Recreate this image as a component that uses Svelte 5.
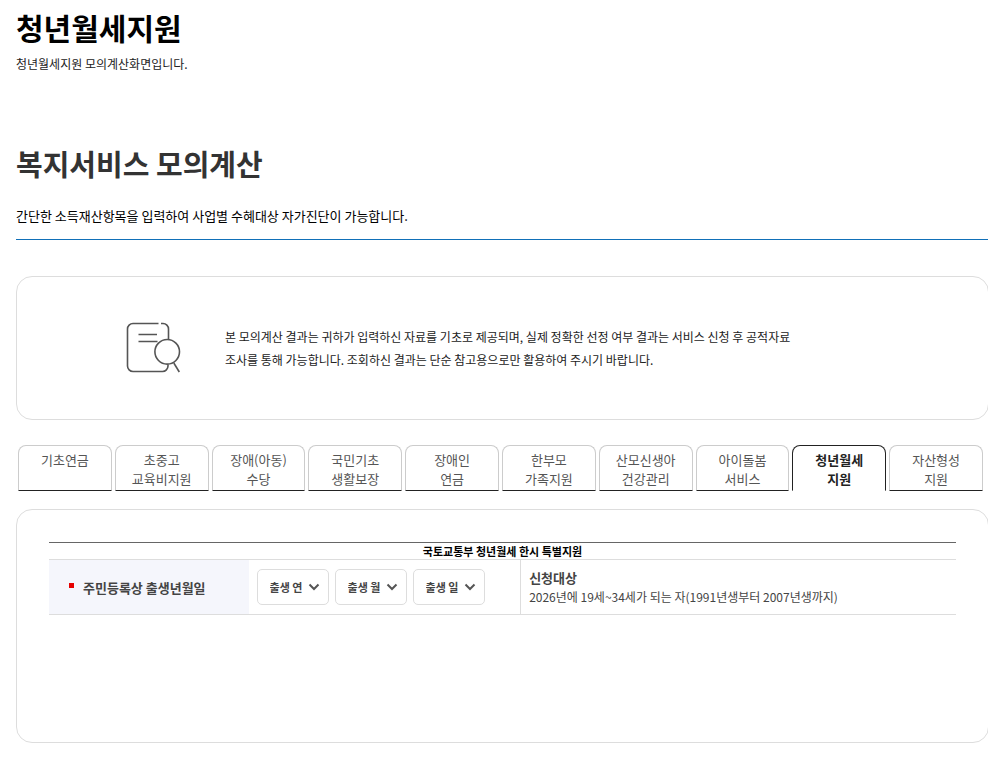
<script lang="ts">
    let selected = $state('youth-rent')

    const tabs = [
        { id: 'pension', lines: ['기초연금'] },
        { id: 'school', lines: ['초중고', '교육비지원'] },
        { id: 'disabled-child', lines: ['장애(아동)', '수당'] },
        { id: 'basic', lines: ['국민기초', '생활보장'] },
        { id: 'disabled-pension', lines: ['장애인', '연금'] },
        { id: 'single-parent', lines: ['한부모', '가족지원'] },
        { id: 'maternity', lines: ['산모신생아', '건강관리'] },
        { id: 'childcare', lines: ['아이돌봄', '서비스'] },
        { id: 'youth-rent', lines: ['청년월세', '지원'] },
        { id: 'asset', lines: ['자산형성', '지원'] }
    ]

    const birthFields = [
        { id: 'birth-year', label: '출생 연', from: 1991, to: 2007 },
        { id: 'birth-month', label: '출생 월', from: 1, to: 12 },
        { id: 'birth-day', label: '출생 일', from: 1, to: 31 }
    ]

    function range(from: number, to: number) {
        return Array.from({ length: to - from + 1 }, (_, i) => from + i)
    }
</script>

<main>
    <header>
        <h1>청년월세지원</h1>
        <p class="summary">청년월세지원 모의계산화면입니다.</p>
    </header>

    <section class="intro">
        <h2>복지서비스 모의계산</h2>
        <p>간단한 소득재산항목을 입력하여 사업별 수혜대상 자가진단이 가능합니다.</p>
    </section>

    <div class="box notice">
        <svg width="56" height="52" viewBox="0 0 56 52" fill="none" stroke="#555" stroke-width="1.6" aria-hidden="true">
            <path d="M32.500 1.500H7a5.500 5.500 0 0 0-5.500 5.500V44a5.500 5.500 0 0 0 5.500 5.500H36.500a5.500 5.500 0 0 0 5.500-5.500V42.500M35 1.500H37a5.500 5.500 0 0 1 5.500 5.500V17.500" />
            <path d="M12.500 12.500H31M12.500 19.500H31.500" />
            <circle cx="41.200" cy="29.800" r="12.300" />
            <path d="M47.800 41L53.300 50" />
        </svg>
        <p>
            본 모의계산 결과는 귀하가 입력하신 자료를 기초로 제공되며, 실제 정확한 선정 여부 결과는 서비스 신청 후 공적자료<br />
            조사를 통해 가능합니다. 조회하신 결과는 단순 참고용으로만 활용하여 주시기 바랍니다.
        </p>
    </div>

    <div class="tabs" role="tablist">
        {#each tabs as tab}
            <button
                role="tab"
                class:active={selected === tab.id}
                aria-selected={selected === tab.id}
                onclick={() => (selected = tab.id)}
            >
                {#each tab.lines as line}
                    <span>{line}</span>
                {/each}
            </button>
        {/each}
    </div>

    <div class="box panel">
        <table>
            <caption>국토교통부 청년월세 한시 특별지원</caption>
            <tbody>
                <tr>
                    <th scope="row"><span class="required">주민등록상 출생년월일</span></th>
                    <td class="birth">
                        <div class="selects">
                            {#each birthFields as field}
                                <div class="select">
                                    <select id={field.id} aria-label={field.label}>
                                        <option value="">{field.label}</option>
                                        {#each range(field.from, field.to) as n}
                                            <option value={n}>{n}</option>
                                        {/each}
                                    </select>
                                    <svg width="12" height="8" viewBox="0 0 12 8" aria-hidden="true">
                                        <path d="M1.500 1.500L6 6L10.500 1.500" fill="none" stroke="#555" stroke-width="2" />
                                    </svg>
                                </div>
                            {/each}
                        </div>
                    </td>
                    <td class="target">
                        <strong>신청대상</strong>
                        <p>2026년에 19세~34세가 되는 자(1991년생부터 2007년생까지)</p>
                    </td>
                </tr>
            </tbody>
        </table>
    </div>
</main>

<style>
    :global(body) {
        background: #fff;
        font-family: "Noto Sans CJK KR", sans-serif;
        font-size: 13px;
        color: #000;
    }
    h1, h2, p {
        margin: 0;
    }
    main {
        margin: 0 19px 0 16px;
        padding-bottom: 24px;
        overflow: hidden;
    }

    h1 {
        padding-top: 7px;
        font-size: 30px;
        line-height: 40px;
        font-weight: 700;
    }
    .summary {
        margin-top: 7px;
        font-size: 12px;
        line-height: 20px;
        color: #222;
    }

    .intro {
        margin-top: 65px;
        padding-bottom: 13px;
        border-bottom: 1px solid #1170b8;
    }
    h2 {
        font-size: 29px;
        line-height: 48px;
        font-weight: 700;
        color: #333;
    }
    .intro p {
        margin-top: 19px;
        line-height: 20px;
    }

    .box {
        box-sizing: border-box;
        margin-right: -1px;
        border: 1px solid #ddd;
        border-radius: 16px;
    }
    .notice {
        display: flex;
        align-items: center;
        gap: 43px;
        min-height: 144px;
        margin-top: 36px;
        padding: 0 109px;
    }
    .notice svg {
        flex: none;
    }
    .notice p {
        font-size: 12px;
        line-height: 23px;
        color: #222;
    }

    .tabs {
        display: grid;
        grid-template-columns: repeat(10, 1fr);
        gap: 3px;
        margin-top: 25px;
        padding: 0 5px 0 2px;
    }
    .tabs button {
        display: flex;
        flex-direction: column;
        align-items: center;
        min-height: 46px;
        padding: 4px 0 2px;
        border: 1px solid #ccc;
        border-bottom-color: #222;
        border-radius: 8px 8px 0 0;
        background: #fff;
        font-family: inherit;
        font-size: 13px;
        line-height: 19px;
        color: #555;
        white-space: nowrap;
        cursor: pointer;
    }
    .tabs button.active {
        border-color: #222;
        border-bottom-color: transparent;
        font-weight: 700;
        color: #222;
    }

    .panel {
        min-height: 234px;
        margin-top: 18px;
        padding: 32px;
    }
    table {
        width: 100%;
        table-layout: fixed;
        border-collapse: collapse;
    }
    caption {
        border-top: 1px solid #666;
        font-size: 11px;
        line-height: 16px;
        font-weight: 700;
    }
    th, td {
        height: 54px;
        padding: 0 8px;
        border-top: 1px solid #ddd;
        border-bottom: 1px solid #ddd;
        text-align: left;
        color: #444;
    }
    th {
        width: 22%;
        box-sizing: border-box;
        padding-left: 20px;
        background: #f5f6fc;
        font-weight: 700;
    }
    .required::before {
        content: "";
        display: inline-block;
        width: 5px;
        height: 5px;
        margin-right: 9px;
        background: #e60000;
        vertical-align: 5px;
    }
    .birth {
        width: 30%;
        box-sizing: border-box;
    }
    .selects {
        display: flex;
        gap: 6px;
    }
    .select {
        position: relative;
    }
    select {
        appearance: none;
        display: block;
        width: 72px;
        height: 36px;
        padding: 0 12px;
        border: 1px solid #ddd;
        border-radius: 5px;
        background: #fff;
        font-family: inherit;
        font-size: 11px;
        font-weight: 700;
        color: #444;
    }
    .select svg {
        position: absolute;
        top: 14px;
        right: 9px;
        pointer-events: none;
    }
    .target {
        border-left: 1px solid #ddd;
        line-height: 19px;
    }
    .target strong {
        font-weight: 700;
    }
    .target p {
        font-size: 12px;
    }
</style>
